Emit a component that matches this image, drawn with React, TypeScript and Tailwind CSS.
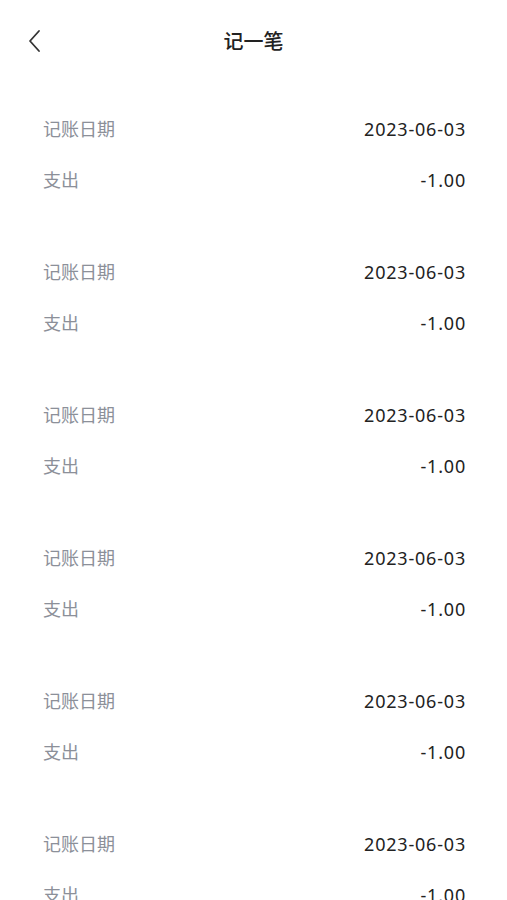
import React from "react";

const records = Array.from({ length: 6 }, () => ({
  date: "2023-06-03",
  type: "支出",
  amount: "-1.00",
}));

const App: React.FC = () => {
  return (
    <div className="w-[507px] h-[900px] overflow-hidden bg-white font-['Noto_Sans','Noto_Sans_CJK_SC',sans-serif]">
      <header className="relative h-[84px] flex items-center justify-center">
        <button className="absolute left-[24px] top-[28px] w-[20px] h-[26px] flex items-center justify-center">
          <svg width="14" height="24" viewBox="0 0 14 24" fill="none">
            <path d="M12 2 L3 12 L12 22" stroke="#333" strokeWidth="1.8" strokeLinecap="round" strokeLinejoin="round" />
          </svg>
        </button>
        <h1 className="text-[20px] text-[#222] font-medium">记一笔</h1>
      </header>

      <div className="flex flex-col">
        {records.map((r, i) => (
          <div key={i} className="pt-[20px] pb-[21px] pl-[43px] pr-[41px]">
            <div className="h-[51px] flex items-center justify-between">
              <span className="text-[18px] text-[#8c9099]">记账日期</span>
              <span className="text-[18px] text-[#222] tracking-[0.8px]">{r.date}</span>
            </div>
            <div className="h-[51px] flex items-center justify-between">
              <span className="text-[18px] text-[#8c9099]">{r.type}</span>
              <span className="text-[18px] text-[#222] tracking-[0.8px]">{r.amount}</span>
            </div>
          </div>
        ))}
      </div>
    </div>
  );
};

export default App;
